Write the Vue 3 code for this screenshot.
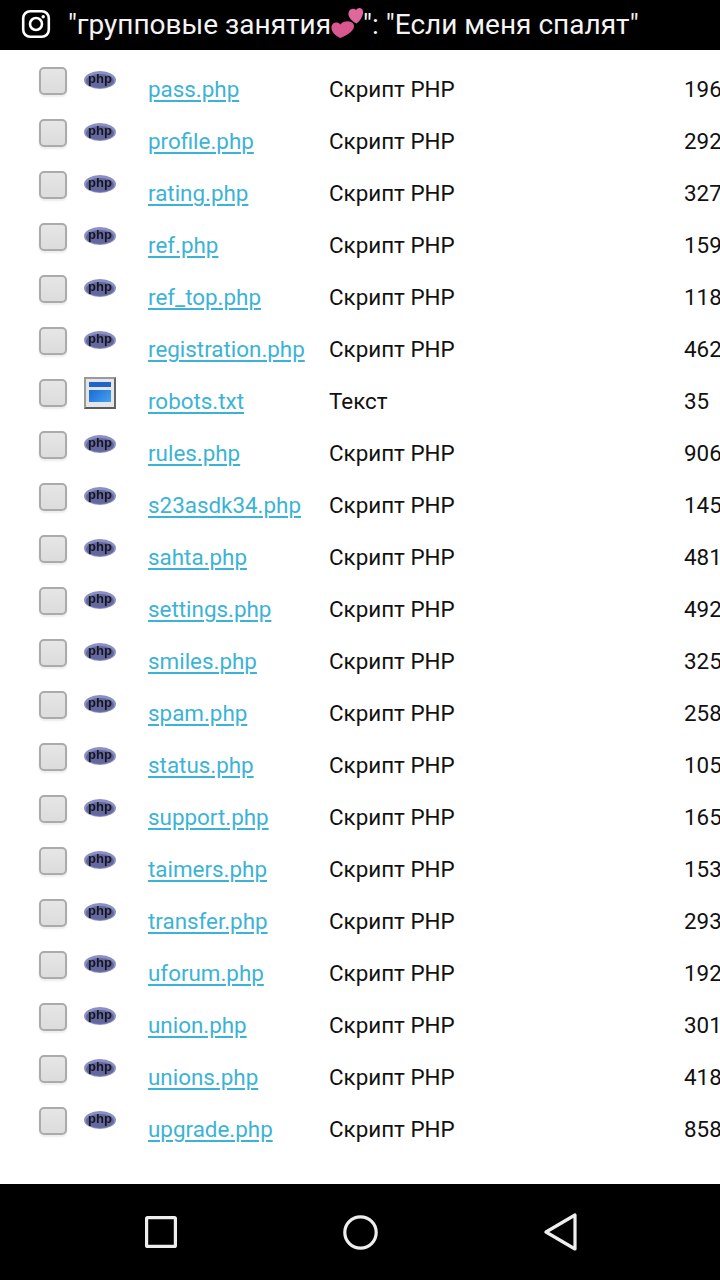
<template>
  <div class="screen">
    <header class="top-bar">
      <svg class="insta" width="30" height="30" viewBox="0 0 30 30" fill="none" stroke="#fff">
        <rect x="2.200" y="2.200" width="25.600" height="25.600" rx="7" stroke-width="2.600" />
        <circle cx="15" cy="15" r="6" stroke-width="2.600" />
        <circle cx="22.200" cy="7.800" r="1.700" fill="#fff" stroke="none" />
      </svg>
      <p class="title">
        "групповые занятия<svg class="hearts" width="32" height="32" viewBox="0 0 32 32">
          <path d="M9 31C3 28 0 24 .5 19.500C1.500 15 6.500 14.500 9.500 17.500C12 13.500 20 13 22.500 17C25 22 18 28 9 31Z" fill="#d9568f" />
          <path d="M25.500 16.500C20.500 14 17 10 17.500 6C18 1.500 23 .5 25 3C26.500 .5 31 0 32 4C32.500 8.500 30 13 25.500 16.500Z" fill="#e0679c" />
        </svg>": "Если меня спалят"
      </p>
    </header>

    <main class="file-list">
      <div v-for="file in files" :key="file.name" class="row">
        <span class="check"></span>
        <svg v-if="file.icon === 'php'" class="file-icon php" width="32" height="20" viewBox="0 0 32 20">
          <ellipse cx="16" cy="10" rx="16" ry="9" fill="#8c8fc2" />
          <ellipse cx="16" cy="11" rx="14" ry="7" fill="#65689f" />
          <text x="16" y="13" text-anchor="middle" class="php-text">php</text>
        </svg>
        <span v-else class="file-icon txt"><i></i><b></b></span>
        <a class="name">{{ file.name }}</a>
        <span class="type">{{ file.type }}</span>
        <span class="size">{{ file.size }}</span>
      </div>
    </main>

    <footer class="nav-bar">
      <svg class="nav-square" width="32" height="32" viewBox="0 0 32 32" fill="none" stroke="#eee" stroke-width="3.200" stroke-linejoin="round">
        <rect x="1.600" y="1.600" width="28.800" height="28.800" rx="1" />
      </svg>
      <svg width="35" height="35" viewBox="0 0 35 35" fill="none" stroke="#eee" stroke-width="3.200">
        <circle cx="17.500" cy="17.500" r="15.700" />
      </svg>
      <svg width="33" height="38" viewBox="0 0 33 38" fill="none" stroke="#eee" stroke-width="3.200" stroke-linejoin="round">
        <path d="M31 2V36L2 19Z" />
      </svg>
    </footer>
  </div>
</template>

<script setup>
const php = [
  ['pass.php', '196'],
  ['profile.php', '292'],
  ['rating.php', '327'],
  ['ref.php', '159'],
  ['ref_top.php', '118'],
  ['registration.php', '462'],
  ['robots.txt', '35'],
  ['rules.php', '906'],
  ['s23asdk34.php', '145'],
  ['sahta.php', '481'],
  ['settings.php', '492'],
  ['smiles.php', '325'],
  ['spam.php', '258'],
  ['status.php', '105'],
  ['support.php', '165'],
  ['taimers.php', '153'],
  ['transfer.php', '293'],
  ['uforum.php', '192'],
  ['union.php', '301'],
  ['unions.php', '418'],
  ['upgrade.php', '858'],
]

const files = php.map(([name, size]) => {
  const isTxt = name.endsWith('.txt')
  return { name, size, icon: isTxt ? 'txt' : 'php', type: isTxt ? 'Текст' : 'Скрипт PHP' }
})
</script>

<style>
body {
  margin: 0;
  background: #fff;
}
</style>

<style scoped>
.screen {
  width: 720px;
  height: 1280px;
  display: flex;
  flex-direction: column;
  overflow: hidden;
  font-family: Roboto, "Liberation Sans", sans-serif;
}

.top-bar {
  height: 50px;
  flex: none;
  background: #000;
  color: #fff;
  display: flex;
  align-items: center;
  padding-left: 21px;
  gap: 17px;
  white-space: nowrap;
}

.insta {
  flex: none;
  margin-top: -2px;
}

.title {
  margin: 0;
  font-size: 28px;
  line-height: 50px;
  color: #f4f4f4;
}

.hearts {
  vertical-align: 5px;
  margin: -10px 0;
}

.file-list {
  flex: 1;
  padding: 14px 0 0 39px;
  background: #fff;
}

.row {
  height: 52px;
  display: grid;
  grid-template-columns: 45px 64px 181px 355px 1fr;
  white-space: nowrap;
  font-size: 22.400px;
  line-height: 50px;
  color: #111;
}

.check {
  box-sizing: border-box;
  width: 28px;
  height: 28px;
  margin-top: 3px;
  border: 2px solid #ababab;
  border-radius: 5px;
  background: linear-gradient(#e6e6e6, #dcdcdc);
  box-shadow: 0 2px 2px rgba(0, 0, 0, 0.08);
}

.file-icon {
  display: block;
  margin-top: 6px;
}

.file-icon.php {
  filter: blur(0.7px);
}

.php-text {
  font-family: "Liberation Sans", sans-serif;
  font-size: 13px;
  font-weight: 700;
  fill: #15151f;
}

.file-icon.txt {
  box-sizing: border-box;
  width: 32px;
  height: 32px;
  margin-top: 1px;
  padding: 3px 3px 5px;
  display: flex;
  flex-direction: column;
  gap: 3px;
  background: #e4e6ea;
  border: 2px solid #9a9a9a;
  border-right-color: #666;
  border-bottom-color: #5c5c5c;
  filter: blur(0.6px);
}

.file-icon.txt i {
  display: block;
  height: 5px;
  background: #1f66c8;
}

.file-icon.txt b {
  display: block;
  flex: 1;
  background: linear-gradient(135deg, #1b6ad6, #45a2f0);
}

.name {
  color: #3cb3d6;
  text-decoration: underline;
  text-underline-offset: 3px;
}

.nav-bar {
  height: 96px;
  flex: none;
  background: #000;
  display: grid;
  grid-template-columns: repeat(3, 200px);
  justify-content: center;
  justify-items: center;
  align-items: center;
}

.nav-square {
  margin-left: 2px;
}
</style>
